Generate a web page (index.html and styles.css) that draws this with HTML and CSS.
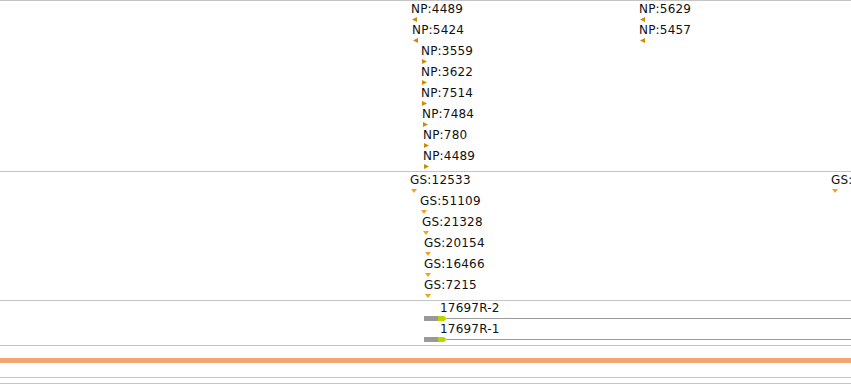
FILE: index.html
```html
<!DOCTYPE html>
<html>
<head>
<meta charset="utf-8">
<link rel="stylesheet" href="styles.css">
</head>
<body>
<div class="browser">
  <div class="track track-np">
    <div class="feat" style="left:411px;top:1px"><span class="lbl">NP:4489</span><i class="tri tri-l"></i></div>
    <div class="feat" style="left:412px;top:22px"><span class="lbl">NP:5424</span><i class="tri tri-l"></i></div>
    <div class="feat" style="left:421px;top:43px"><span class="lbl">NP:3559</span><i class="tri tri-r"></i></div>
    <div class="feat" style="left:421px;top:64px"><span class="lbl">NP:3622</span><i class="tri tri-r"></i></div>
    <div class="feat" style="left:421px;top:85px"><span class="lbl">NP:7514</span><i class="tri tri-r"></i></div>
    <div class="feat" style="left:422px;top:106px"><span class="lbl">NP:7484</span><i class="tri tri-r"></i></div>
    <div class="feat" style="left:423px;top:127px"><span class="lbl">NP:780</span><i class="tri tri-r"></i></div>
    <div class="feat" style="left:423px;top:148px"><span class="lbl">NP:4489</span><i class="tri tri-r"></i></div>
    <div class="feat" style="left:639px;top:1px"><span class="lbl">NP:5629</span><i class="tri tri-l"></i></div>
    <div class="feat" style="left:639px;top:22px"><span class="lbl">NP:5457</span><i class="tri tri-l"></i></div>
  </div>
  <div class="track track-gs">
    <div class="feat" style="left:410px;top:1px"><span class="lbl">GS:12533</span><i class="tri tri-d"></i></div>
    <div class="feat" style="left:420px;top:22px"><span class="lbl">GS:51109</span><i class="tri tri-d"></i></div>
    <div class="feat" style="left:422px;top:43px"><span class="lbl">GS:21328</span><i class="tri tri-d"></i></div>
    <div class="feat" style="left:424px;top:64px"><span class="lbl">GS:20154</span><i class="tri tri-d"></i></div>
    <div class="feat" style="left:424px;top:85px"><span class="lbl">GS:16466</span><i class="tri tri-d"></i></div>
    <div class="feat" style="left:424px;top:106px"><span class="lbl">GS:7215</span><i class="tri tri-d"></i></div>
    <div class="feat" style="left:831px;top:1px"><span class="lbl">GS:12533</span><i class="tri tri-d"></i></div>
  </div>
  <div class="track track-gene">
    <div class="gene" style="left:424px;top:0px">
      <span class="lbl gene-lbl">17697R-2</span>
      <svg class="gene-bar" width="427" height="5" viewBox="0 0 427 5"><rect x="0" y="0" width="14" height="5" fill="#999999"/><polygon points="14,0 20,0 23,2.5 20,5 14,5" fill="#bcd400"/><rect x="23" y="2" width="404" height="1" fill="#9a9a9a"/></svg>
    </div>
    <div class="gene" style="left:424px;top:21px">
      <span class="lbl gene-lbl">17697R-1</span>
      <svg class="gene-bar" width="427" height="5" viewBox="0 0 427 5"><rect x="0" y="0" width="14" height="5" fill="#999999"/><polygon points="14,0 20,0 23,2.5 20,5 14,5" fill="#bcd400"/><rect x="23" y="2" width="404" height="1" fill="#9a9a9a"/></svg>
    </div>
  </div>
  <div class="ruler"></div>
  <div class="footer-lines"></div>
</div>
</body>
</html>
```
FILE: styles.css
```css
html, body {
  margin: 0;
  padding: 0;
  background: #ffffff;
  overflow: hidden;
}
body {
  font-family: "DejaVu Sans", "Liberation Sans", sans-serif;
  font-size: 12px;
  color: #111111;
  width: 851px;
  height: 385px;
}
.browser {
  display: flex;
  flex-direction: column;
  width: 851px;
}
.track {
  position: relative;
  overflow: hidden;
  border-top: 1px solid #c4c4c4;
}
.track-np { height: 170px; }
.track-gs { height: 128px; }
.track-gene {
  height: 44px;
  border-bottom: 1px solid #c4c4c4;
}
.feat {
  position: absolute;
  display: flex;
  flex-direction: column;
  align-items: flex-start;
}
.lbl {
  display: block;
  line-height: 14px;
  white-space: nowrap;
  letter-spacing: 0.2px;
}
.tri {
  display: block;
  margin-top: 1px;
}
.tri-l, .tri-r {
  width: 5px;
  height: 5px;
  margin-left: 1px;
  background: #d08a00;
}
.tri-l { clip-path: polygon(0 50%, 100% 0, 100% 100%); }
.tri-r { clip-path: polygon(0 0, 100% 50%, 0 100%); }
.tri-d {
  width: 6px;
  height: 4px;
  margin-left: 1px;
  margin-top: 2px;
  background: #f0a41e;
  clip-path: polygon(0 0, 100% 0, 50% 100%);
}
.gene {
  position: absolute;
  display: flex;
  flex-direction: column;
}
.gene-lbl {
  margin-left: 16px;
}
.gene-bar {
  display: block;
  margin-top: 1px;
}
.ruler {
  margin-top: 12px;
  height: 5px;
  background: #f4a672;
}
.footer-lines {
  margin-top: 14px;
  height: 5px;
  border-top: 1px solid #c4c4c4;
  border-bottom: 1px solid #c4c4c4;
}
```
